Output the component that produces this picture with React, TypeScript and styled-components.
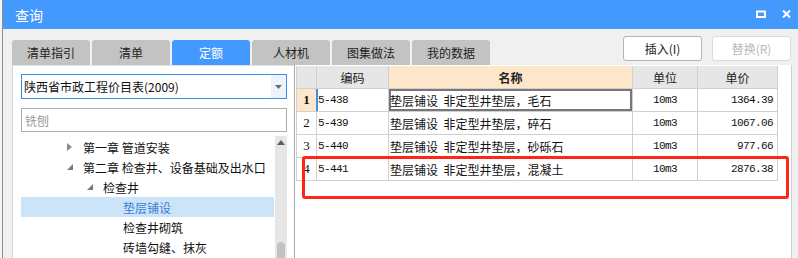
import React from 'react';
import styled, { createGlobalStyle } from 'styled-components';

const GlobalStyle = createGlobalStyle`
  html, body {
    margin: 0;
    padding: 0;
    background: #f0f0f0;
  }
  * {
    box-sizing: border-box;
  }
`;

const UI_FONT = '"Noto Sans CJK SC", "Noto Sans", sans-serif';
const MONO_FONT = '"Liberation Mono", "Noto Sans CJK SC", monospace';

const Page = styled.div`
  display: flex;
  width: 798px;
  height: 258px;
  overflow: hidden;
  font-family: ${UI_FONT};
`;

const BackStrip = styled.div`
  width: 3px;
  flex-shrink: 0;
  background: #f4f4f4;
  border-right: 1px solid #8c8c8c;
`;

const Window = styled.div`
  flex: 1;
  display: flex;
  flex-direction: column;
  background: #f0f0f0;
`;

const TitleBar = styled.div`
  height: 29px;
  flex-shrink: 0;
  display: flex;
  align-items: center;
  justify-content: space-between;
  padding: 0 7px 0 12px;
  background: #4499ff;
`;

const Title = styled.span`
  color: #fff;
  font-size: 14px;
  line-height: 1;
`;

const WinButtons = styled.div`
  display: flex;
  align-items: center;
  gap: 16px;
  margin-top: -2px;
`;

const Toolbar = styled.div`
  height: 36px;
  flex-shrink: 0;
  display: flex;
  justify-content: space-between;
  padding: 0 7px 0 9px;
`;

const Tabs = styled.div`
  align-self: flex-end;
  display: flex;
  gap: 2px;
`;

const Tab = styled.div<{ $active?: boolean }>`
  width: 78px;
  height: 25px;
  display: flex;
  align-items: center;
  justify-content: center;
  border-radius: 3px 3px 0 0;
  font-size: 12px;
  color: ${(p) => (p.$active ? '#ffffff' : '#222222')};
  background: ${(p) => (p.$active ? '#4499ff' : '#c3c3c3')};
`;

const Actions = styled.div`
  display: flex;
  gap: 10px;
  margin-top: 7px;
`;

const ActionButton = styled.div<{ $disabled?: boolean }>`
  width: 79px;
  height: 25px;
  display: flex;
  align-items: center;
  justify-content: center;
  background: #fff;
  border: 1px solid ${(p) => (p.$disabled ? '#dcdcdc' : '#b4b4b4')};
  border-radius: 3px;
  font-size: 12px;
  color: ${(p) => (p.$disabled ? '#b8b8b8' : '#222')};
`;

const Content = styled.div`
  flex: 1;
  display: flex;
  min-height: 0;
  padding: 0 6px 0 9px;
`;

const LeftPanel = styled.div`
  width: 282px;
  flex-shrink: 0;
  display: flex;
  flex-direction: column;
  background: #fff;
  border-left: 1px solid #d4d4d4;
  border-top: 1px solid #e2e2e2;
  padding: 8px 7px 0 8px;
`;

const Select = styled.div`
  height: 25px;
  display: flex;
  border: 1px solid #3d8ee8;
  background: #fff;
`;

const SelectText = styled.span`
  flex: 1;
  display: flex;
  align-items: center;
  padding-left: 2px;
  font-size: 12px;
  color: #111;
  white-space: nowrap;
`;

const SelectArrow = styled.span`
  width: 15px;
  display: flex;
  align-items: center;
  justify-content: center;
  background: #ecf3fc;
`;

const SearchBox = styled.div`
  height: 24px;
  margin-top: 9px;
  display: flex;
  align-items: center;
  padding-left: 3px;
  border: 1px solid #ababab;
  font-size: 12px;
  color: #9a9a9a;
`;

const TreeArea = styled.div`
  flex: 1;
  display: flex;
  gap: 1px;
  margin-top: 4px;
  min-height: 0;
  overflow: hidden;
`;

const TreeList = styled.div`
  flex: 1;
  padding-top: 1px;
`;

const TreeRow = styled.div<{ $level: number; $selected?: boolean }>`
  height: 20px;
  display: flex;
  align-items: center;
  padding-left: ${(p) => 46 + p.$level * 20}px;
  font-size: 12px;
  white-space: nowrap;
  color: ${(p) => (p.$selected ? '#3a7ed6' : '#111')};
  background: ${(p) => (p.$selected ? '#cce4f8' : 'transparent')};
`;

const Toggle = styled.span`
  width: 16px;
  height: 20px;
  flex-shrink: 0;
  display: flex;
  align-items: center;
`;

const ScrollBar = styled.div`
  width: 12px;
  flex-shrink: 0;
  display: flex;
  flex-direction: column;
  justify-content: space-between;
  align-items: center;
  background: #e6e6e6;
  padding-top: 4px;
`;

const ScrollThumb = styled.div`
  width: 8px;
  height: 16px;
  border-radius: 4px 4px 0 0;
  background: #c2c2c2;
`;

const RightPanel = styled.div`
  position: relative;
  flex: 1;
  background: #fff;
  border-left: 1px solid #a9a9a9;
  border-right: 1px solid #cfcfcf;
  padding: 1px 0 0 1px;
`;

const Grid = styled.div`
  display: grid;
  grid-template-columns: 20px 72px 244px 65px 80px;
  grid-auto-rows: 23px;
  width: 482px;
  border-left: 1px solid #d0d0d0;
`;

type CellKind = 'num' | 'code' | 'name' | 'unit' | 'price';

const HeadCell = styled.div<{ $accent?: boolean }>`
  display: flex;
  align-items: center;
  justify-content: center;
  border-right: 1px solid #d0d0d0;
  border-bottom: 1px solid #d0d0d0;
  font-size: 12px;
  color: #222;
  font-weight: ${(p) => (p.$accent ? 700 : 400)};
  background: ${(p) => (p.$accent ? '#fde6c9' : '#e6e6e6')};
`;

const Cell = styled.div<{ $kind: CellKind; $current?: boolean; $focused?: boolean }>`
  display: flex;
  align-items: center;
  white-space: pre;
  border-right: 1px solid
    ${(p) => (p.$kind === 'num' && p.$current ? '#3d8fe8' : '#d0d0d0')};
  border-bottom: 1px solid #d0d0d0;
  color: #111;
  justify-content: ${(p) =>
    p.$kind === 'num' || p.$kind === 'unit' ? 'center' : p.$kind === 'price' ? 'flex-end' : 'flex-start'};
  padding: ${(p) => (p.$kind === 'price' ? '0 4px 0 0' : p.$kind === 'code' || p.$kind === 'name' ? '0 0 0 1px' : '0')};
  font-family: ${(p) => (p.$kind === 'name' ? UI_FONT : p.$kind === 'num' ? '"Liberation Serif", serif' : MONO_FONT)};
  font-size: ${(p) => (p.$kind === 'name' ? '12px' : p.$kind === 'num' ? '13px' : '11px')};
  letter-spacing: ${(p) => (p.$kind === 'code' || p.$kind === 'unit' || p.$kind === 'price' ? '-0.6px' : '0')};
  font-weight: ${(p) => (p.$kind === 'num' && p.$current ? 700 : 400)};
  background: ${(p) => (p.$kind === 'num' && p.$current ? '#fde6c9' : '#fff')};
  box-shadow: ${(p) =>
    p.$focused ? 'inset 0 0 0 2px #777' : p.$kind === 'code' && p.$current ? 'inset 1px 0 0 #3d8fe8' : 'none'};
`;

const Highlight = styled.div`
  position: absolute;
  left: 7px;
  top: 91px;
  width: 487px;
  height: 43px;
  border: 3px solid #ff2618;
  border-radius: 3px;
  pointer-events: none;
`;

const tabs = ['清单指引', '清单', '定额', '人材机', '图集做法', '我的数据'];

const tree = [
  { label: '第一章 管道安装', level: 0, toggle: 'closed' },
  { label: '第二章 检查井、设备基础及出水口', level: 0, toggle: 'open' },
  { label: '检查井', level: 1, toggle: 'open' },
  { label: '垫层铺设', level: 2, selected: true },
  { label: '检查井砌筑', level: 2 },
  { label: '砖墙勾缝、抹灰', level: 2 },
];

const rows = [
  { code: '5-438', name: '垫层铺设  非定型井垫层，毛石', unit: '10m3', price: '1364.39' },
  { code: '5-439', name: '垫层铺设  非定型井垫层，碎石', unit: '10m3', price: '1067.06' },
  { code: '5-440', name: '垫层铺设  非定型井垫层，砂砾石', unit: '10m3', price: '977.66' },
  { code: '5-441', name: '垫层铺设  非定型井垫层，混凝土', unit: '10m3', price: '2876.38' },
];

function ToggleIcon({ kind }: { kind?: string }) {
  if (kind === 'closed') {
    return (
      <svg width="6" height="8" viewBox="0 0 6 8">
        <path d="M0 0 L5 4 L0 8 Z" fill="#8a8a8a" />
      </svg>
    );
  }
  if (kind === 'open') {
    return (
      <svg width="6" height="6" viewBox="0 0 6 6">
        <path d="M6 0 L6 6 L0 6 Z" fill="#7a7a7a" />
      </svg>
    );
  }
  return null;
}

export default function App() {
  return (
    <Page>
      <GlobalStyle />
      <BackStrip />
      <Window>
        <TitleBar>
          <Title>查询</Title>
          <WinButtons>
            <svg width="10" height="8" viewBox="0 0 10 8">
              <rect x="1" y="1.5" width="8" height="5.5" fill="none" stroke="#fff" strokeWidth="2" />
            </svg>
            <svg width="9" height="8" viewBox="0 0 9 8">
              <path d="M1 0.5 L8 7.5 M8 0.5 L1 7.5" stroke="#fff" strokeWidth="2" />
            </svg>
          </WinButtons>
        </TitleBar>

        <Toolbar>
          <Tabs>
            {tabs.map((t) => (
              <Tab key={t} $active={t === '定额'}>
                {t}
              </Tab>
            ))}
          </Tabs>
          <Actions>
            <ActionButton>插入(I)</ActionButton>
            <ActionButton $disabled>替换(R)</ActionButton>
          </Actions>
        </Toolbar>

        <Content>
          <LeftPanel>
            <Select>
              <SelectText>陕西省市政工程价目表(2009)</SelectText>
              <SelectArrow>
                <svg width="7" height="4" viewBox="0 0 7 4">
                  <path d="M0 0 L7 0 L3.5 4 Z" fill="#6c6c6c" />
                </svg>
              </SelectArrow>
            </Select>
            <SearchBox>铣刨</SearchBox>
            <TreeArea>
              <TreeList>
                {tree.map((n) => (
                  <TreeRow key={n.label} $level={n.level} $selected={n.selected}>
                    <Toggle>
                      <ToggleIcon kind={n.toggle} />
                    </Toggle>
                    {n.label}
                  </TreeRow>
                ))}
              </TreeList>
              <ScrollBar>
                <svg width="8" height="5" viewBox="0 0 8 5">
                  <path d="M0 5 L4 0 L8 5 Z" fill="#5e5e5e" />
                </svg>
                <ScrollThumb />
              </ScrollBar>
            </TreeArea>
          </LeftPanel>

          <RightPanel>
            <Grid>
              <HeadCell />
              <HeadCell>编码</HeadCell>
              <HeadCell $accent>名称</HeadCell>
              <HeadCell>单位</HeadCell>
              <HeadCell>单价</HeadCell>
              {rows.map((r, i) => (
                <React.Fragment key={r.code}>
                  <Cell $kind="num" $current={i === 0}>
                    {i + 1}
                  </Cell>
                  <Cell $kind="code" $current={i === 0}>
                    {r.code}
                  </Cell>
                  <Cell $kind="name" $focused={i === 0}>
                    {r.name}
                  </Cell>
                  <Cell $kind="unit">{r.unit}</Cell>
                  <Cell $kind="price">{r.price}</Cell>
                </React.Fragment>
              ))}
            </Grid>
            <Highlight />
          </RightPanel>
        </Content>
      </Window>
    </Page>
  );
}
